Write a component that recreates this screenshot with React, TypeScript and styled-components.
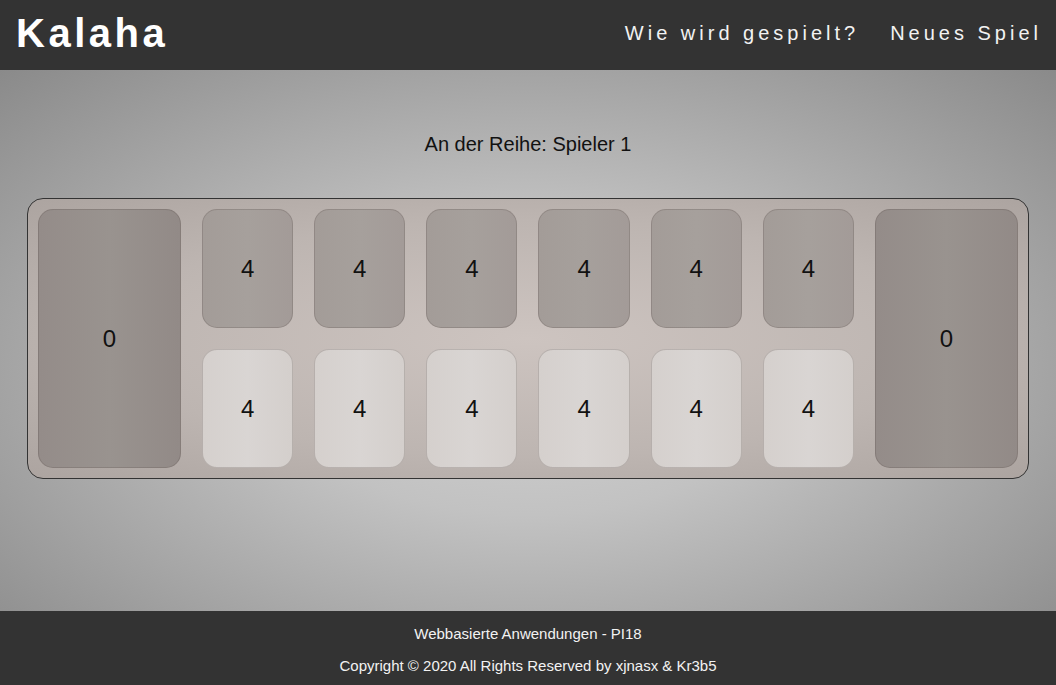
import React from "react";
import styled, { createGlobalStyle } from "styled-components";

const GlobalStyle = createGlobalStyle`
  html, body {
    margin: 0;
    padding: 0;
    height: 100%;
  }
  body {
    font-family: "Liberation Sans", Arial, sans-serif;
  }
`;

const Page = styled.div`
  display: flex;
  flex-direction: column;
  height: 100vh;
`;

const Header = styled.header`
  height: 70px;
  flex-shrink: 0;
  background: #333333;
  display: flex;
  align-items: center;
  justify-content: space-between;
  padding: 0 14px 0 16px;
`;

const Logo = styled.h1`
  margin: 0;
  color: #ffffff;
  font-size: 40px;
  font-weight: bold;
  letter-spacing: 3.5px;
  position: relative;
  top: -2px;
`;

const Nav = styled.nav`
  display: flex;
  gap: 31px;
  position: relative;
  top: -2px;
`;

const NavLink = styled.a`
  color: #f2f2f2;
  font-size: 20px;
  letter-spacing: 4px;
  text-decoration: none;
  cursor: pointer;
`;

const Main = styled.main`
  flex: 1;
  background: radial-gradient(ellipse at 50% 55%, #d2d2d2 0%, #c2c2c2 35%, #8a8a8a 100%);
  display: flex;
  flex-direction: column;
  align-items: center;
  padding: 62px 27px 0;
`;

const Status = styled.p`
  margin: 0 0 42px;
  font-size: 20px;
  line-height: 24px;
  color: #111111;
`;

const Board = styled.div`
  box-sizing: border-box;
  width: 100%;
  border: 1px solid #333333;
  border-radius: 16px;
  padding: 10px;
  background: radial-gradient(ellipse at center, #cdc4c0 0%, #bdb5b1 60%, #aca4a0 100%);
  display: grid;
  grid-template-columns: 143px 1fr 143px;
  column-gap: 21px;
`;

const Cell = styled.div<{ $tone: "store" | "dark" | "light" }>`
  box-sizing: border-box;
  border-radius: 15px;
  border: 1px solid rgba(90, 80, 76, 0.25);
  display: flex;
  align-items: center;
  justify-content: center;
  font-size: 24px;
  color: #111111;
  background: ${(p) =>
    p.$tone === "store"
      ? "linear-gradient(90deg, #948c89 0%, #99938f 50%, #928a87 100%)"
      : p.$tone === "dark"
      ? "linear-gradient(90deg, #a39c98 0%, #a6a09c 50%, #a39b98 100%)"
      : "linear-gradient(90deg, #d5d0cd 0%, #d9d5d3 50%, #d4cfcc 100%)"};
`;

const Store = styled(Cell)`
  height: 259px;
`;

const Pits = styled.div`
  display: grid;
  grid-template-columns: repeat(6, 1fr);
  grid-template-rows: 119px 119px;
  gap: 21px;
`;

const Footer = styled.footer`
  height: 74px;
  flex-shrink: 0;
  background: #333333;
  color: #f2f2f2;
  font-size: 15px;
  display: flex;
  flex-direction: column;
  align-items: center;
  padding-top: 14px;
  box-sizing: border-box;
  gap: 14px;
  line-height: 18px;
`;

const topRow = [4, 4, 4, 4, 4, 4];
const bottomRow = [4, 4, 4, 4, 4, 4];

export default function App() {
  return (
    <Page>
      <GlobalStyle />
      <Header>
        <Logo>Kalaha</Logo>
        <Nav>
          <NavLink>Wie wird gespielt?</NavLink>
          <NavLink>Neues Spiel</NavLink>
        </Nav>
      </Header>
      <Main>
        <Status>An der Reihe: Spieler 1</Status>
        <Board>
          <Store $tone="store">0</Store>
          <Pits>
            {topRow.map((n, i) => (
              <Cell key={"t" + i} $tone="dark">
                {n}
              </Cell>
            ))}
            {bottomRow.map((n, i) => (
              <Cell key={"b" + i} $tone="light">
                {n}
              </Cell>
            ))}
          </Pits>
          <Store $tone="store">0</Store>
        </Board>
      </Main>
      <Footer>
        <span>Webbasierte Anwendungen - PI18</span>
        <span>Copyright © 2020 All Rights Reserved by xjnasx &amp; Kr3b5</span>
      </Footer>
    </Page>
  );
}
